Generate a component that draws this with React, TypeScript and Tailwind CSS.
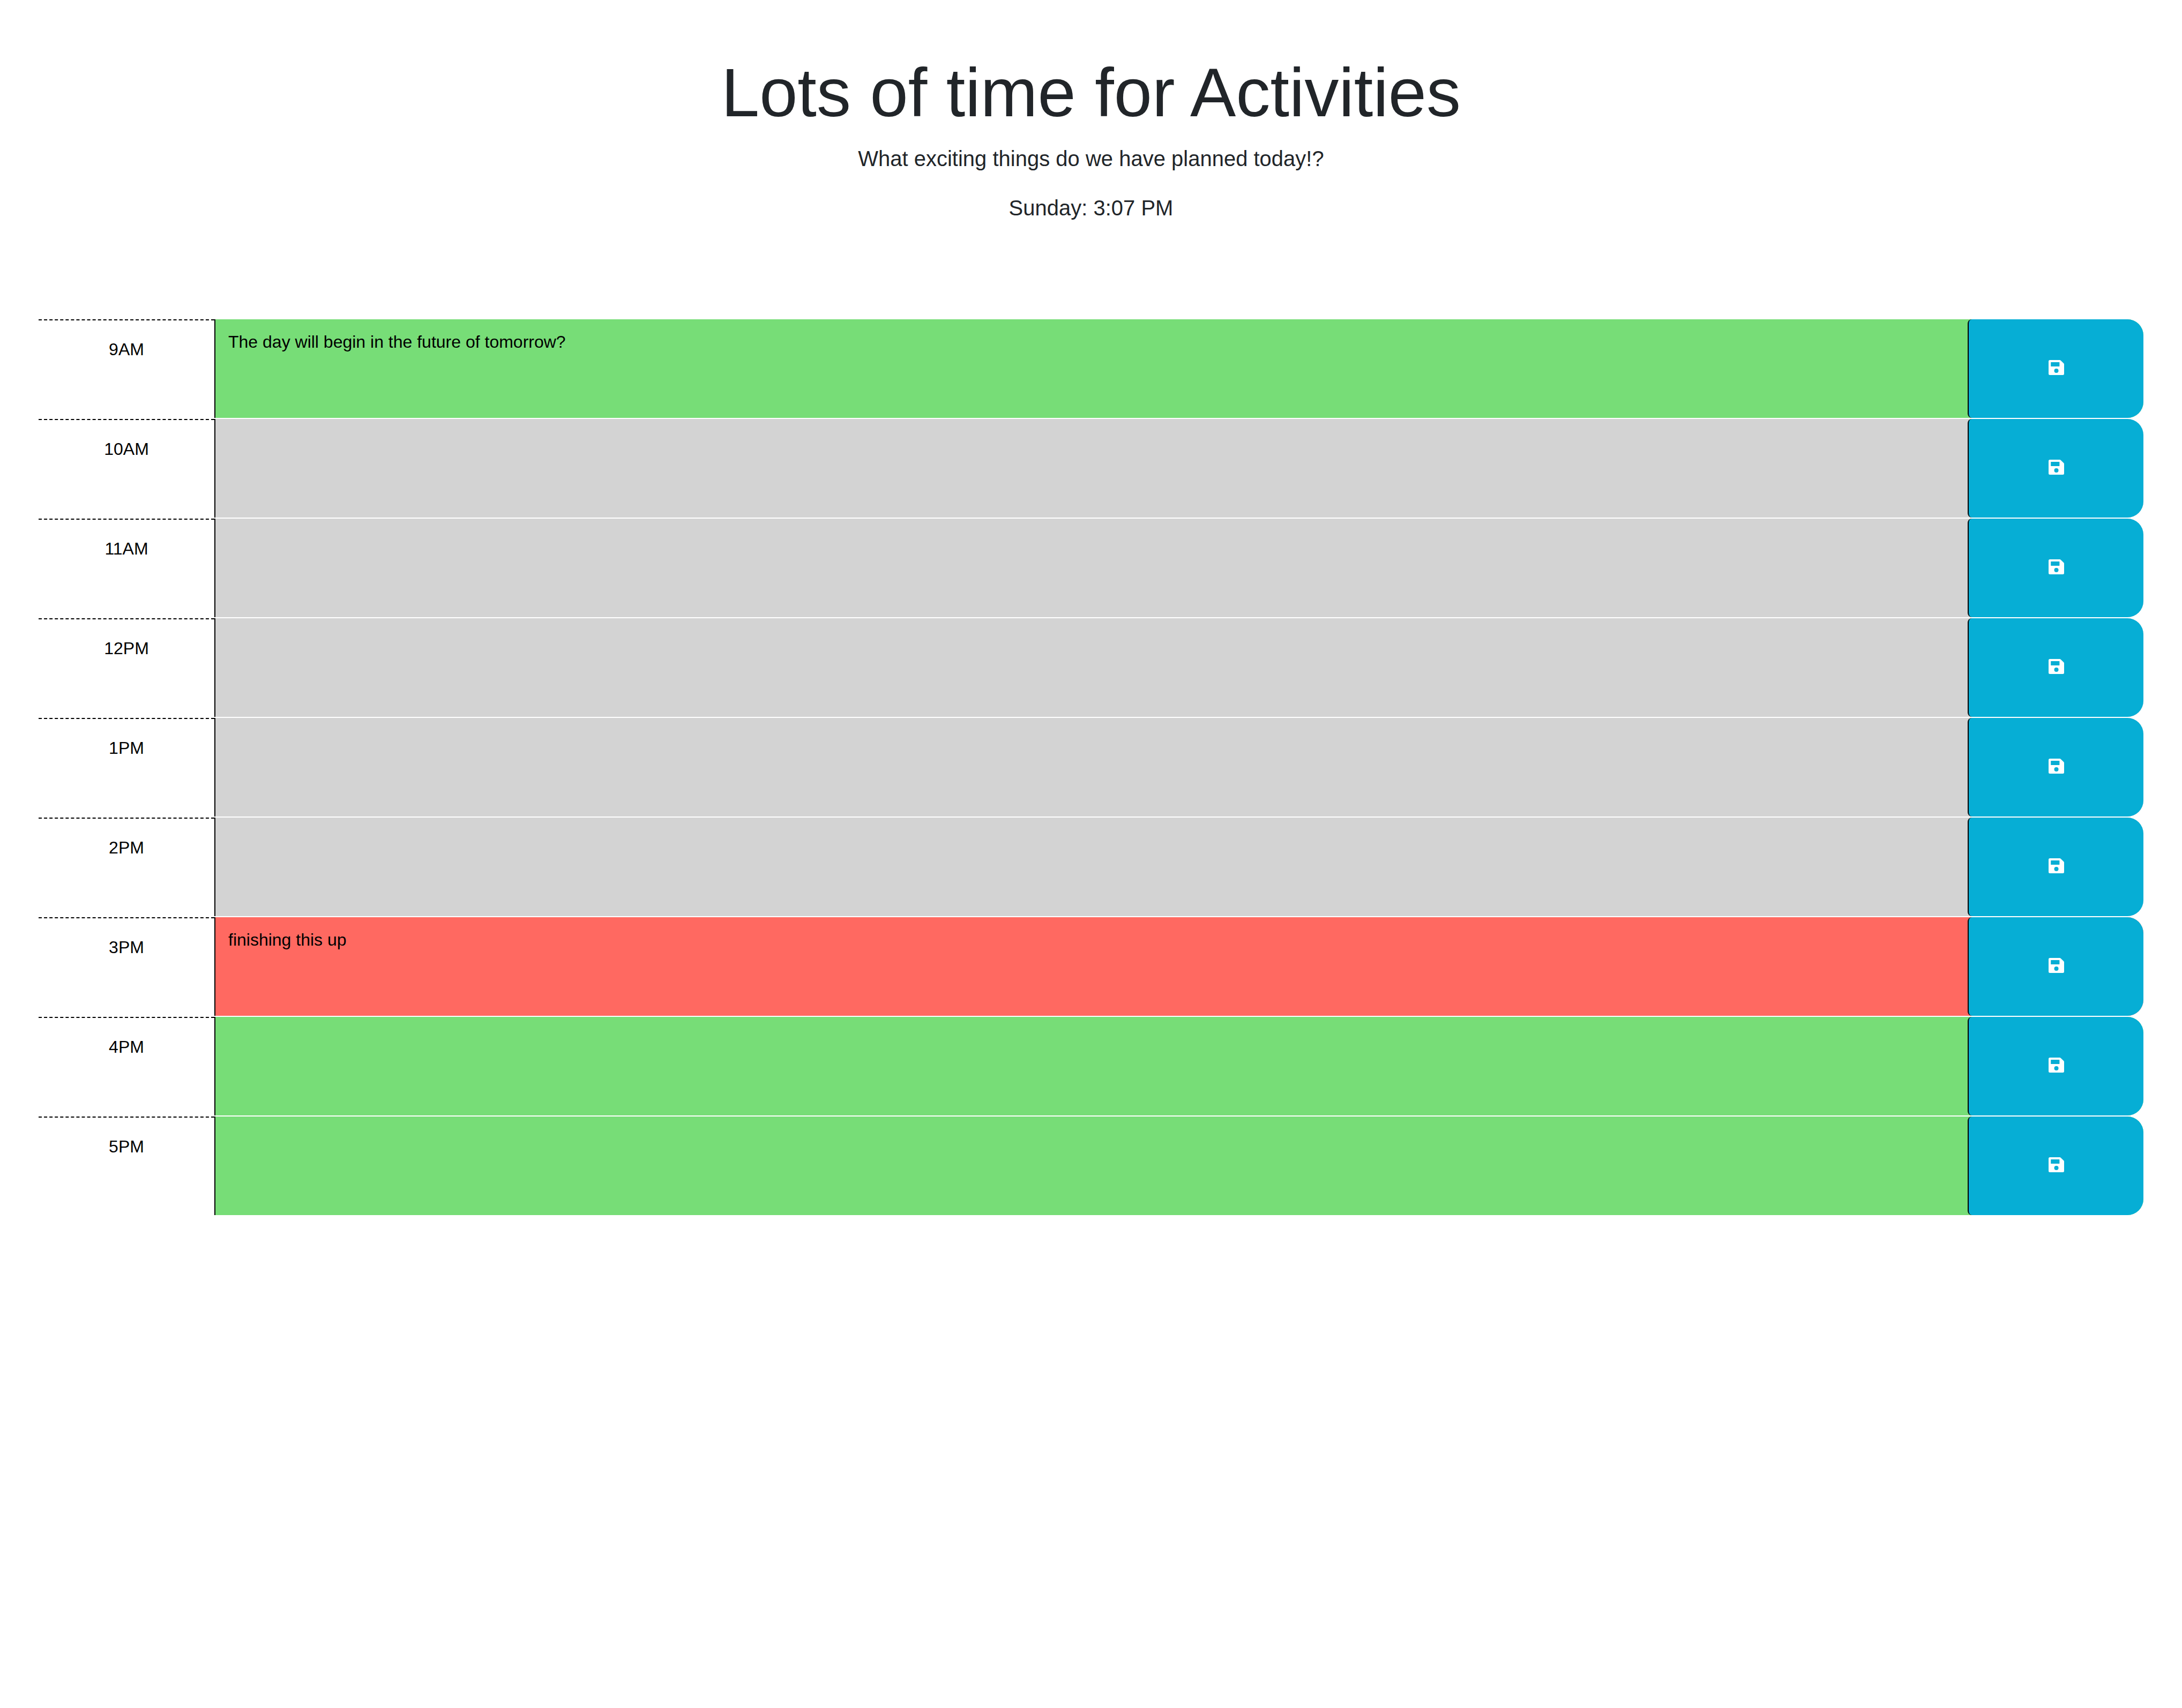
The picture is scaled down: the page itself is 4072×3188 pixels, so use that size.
import { useState } from "react";

type Phase = "past" | "present" | "future";

interface Block {
  hour: string;
  phase: Phase;
  text: string;
}

const phaseClass: Record<Phase, string> = {
  past: "bg-[#d3d3d3]",
  present: "bg-[#ff6961]",
  future: "bg-[#77dd77]",
};

const initialBlocks: Block[] = [
  { hour: "9AM", phase: "future", text: "The day will begin in the future of tomorrow?" },
  { hour: "10AM", phase: "past", text: "" },
  { hour: "11AM", phase: "past", text: "" },
  { hour: "12PM", phase: "past", text: "" },
  { hour: "1PM", phase: "past", text: "" },
  { hour: "2PM", phase: "past", text: "" },
  { hour: "3PM", phase: "present", text: "finishing this up" },
  { hour: "4PM", phase: "future", text: "" },
  { hour: "5PM", phase: "future", text: "" },
];

function SaveIcon() {
  return (
    <svg width="29" height="28" viewBox="0 0 29 28" fill="currentColor" aria-hidden="true">
      <path
        fillRule="evenodd"
        d="M2.5 0H20.8a2.5 2.5 0 0 1 1.8.7L28.3 6.3a2.5 2.5 0 0 1 .7 1.8V25.5a2.5 2.5 0 0 1-2.5 2.5H2.5A2.5 2.5 0 0 1 0 25.5V2.5A2.5 2.5 0 0 1 2.5 0ZM4.6 4a.4.4 0 0 0-.4.4v7.2c0 .2.2.4.4.4H20a.4.4 0 0 0 .4-.4V4.4A.4.4 0 0 0 20 4ZM14.5 16a4 4 0 1 0 0 8 4 4 0 0 0 0-8Z"
      />
    </svg>
  );
}

function TimeBlock({ block }: { block: Block }) {
  const [text, setText] = useState(block.text);
  const fieldId = `plan-${block.hour}`;

  return (
    <form
      onSubmit={(event) => event.preventDefault()}
      className="border-t-2 border-white text-[32px] leading-[48px] text-black"
    >
      <div
        className={`grid min-h-[184px] grid-cols-[328px_1fr_328px] rounded-r-[30px] ${phaseClass[block.phase]}`}
      >
        <label
          htmlFor={fieldId}
          className="border-t-2 border-dashed border-black bg-white pt-[30px] text-center"
        >
          {block.hour}
        </label>
        <textarea
          id={fieldId}
          value={text}
          onChange={(event) => setText(event.target.value)}
          spellCheck={false}
          className="block h-full w-full resize-none border-l-2 border-black bg-transparent px-6 pt-[18px] outline-none"
        />
        <button
          type="submit"
          aria-label={`Save ${block.hour}`}
          className="flex items-center justify-center rounded-l-lg rounded-r-[30px] border-l-2 border-black bg-[#06aed5] pb-1 text-white"
        >
          <SaveIcon />
        </button>
      </div>
    </form>
  );
}

export default function App() {
  return (
    <div className="min-h-screen bg-white font-['Liberation_Sans',Arial,sans-serif] text-[#212529]">
      <header className="mb-12 px-8 pt-24 pb-32 text-center text-[40px] leading-[60px]">
        <h1 className="mb-4 text-[128px] leading-[154px]">Lots of time for Activities</h1>
        <p className="mb-8">What exciting things do we have planned today!?</p>
        <p>Sunday: 3:07 PM</p>
      </header>
      <main className="px-[72px]">
        {initialBlocks.map((block) => (
          <TimeBlock key={block.hour} block={block} />
        ))}
      </main>
    </div>
  );
}
